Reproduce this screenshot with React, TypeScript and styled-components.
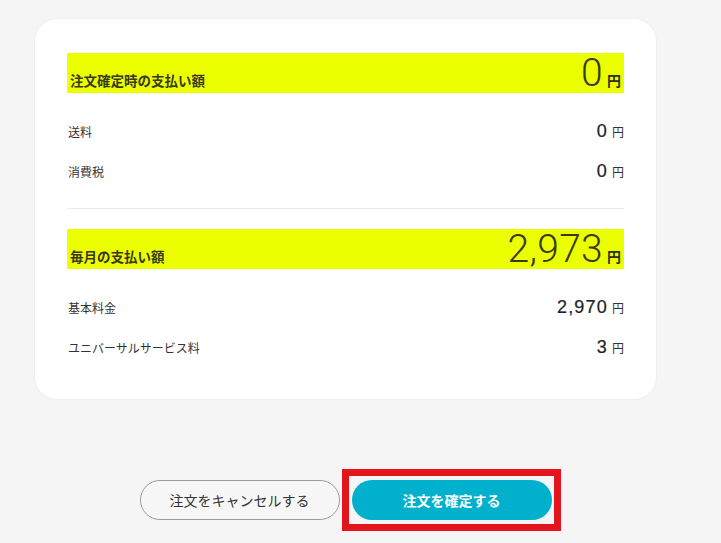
import React from "react";
import styled, { createGlobalStyle } from "styled-components";

const GlobalStyle = createGlobalStyle`
  html, body { margin: 0; padding: 0; background: #f5f5f5; }
  body {
    font-family: "Noto Sans CJK JP", "Noto Sans", sans-serif;
    color: #333;
  }
`;

const Page = styled.div`
  width: 721px;
  height: 543px;
  overflow: hidden;
  padding-top: 19px;
  box-sizing: border-box;
`;

const Card = styled.section`
  margin-left: 35px;
  width: 621px;
  box-sizing: border-box;
  background: #fff;
  border-radius: 22px;
  box-shadow: 0 0 0 1px #efefef;
  padding: 34px 32px 32px;
`;

const Bar = styled.div`
  height: 40px;
  background: #ebff00;
  display: flex;
  align-items: flex-end;
  justify-content: space-between;
  padding: 0 3px 5px;
  box-sizing: border-box;
`;

const BarLabel = styled.span`
  font-size: 13.5px;
  font-weight: 700;
  color: #3a3a1a;
  line-height: 1;
  padding-bottom: 1px;
`;

const BarAmount = styled.span`
  display: flex;
  align-items: baseline;
  line-height: 1;
`;

const BigNumber = styled.span`
  font-family: "Roboto", "Liberation Sans", sans-serif;
  font-weight: 300;
  font-size: 39px;
  color: #3a3a1a;
  line-height: 30px;
  letter-spacing: 0.3px;
`;

const BigYen = styled.span`
  font-size: 14px;
  font-weight: 700;
  margin-left: 4px;
  color: #2e2e10;
`;

const List = styled.div`
  padding-top: 18px;
`;

const Row = styled.div`
  height: 40px;
  display: flex;
  align-items: center;
  justify-content: space-between;
  padding-left: 1px;
`;

const RowLabel = styled.span`
  font-size: 12px;
  color: #333;
`;

const RowValue = styled.span`
  display: flex;
  align-items: baseline;
`;

const Num = styled.span`
  font-family: "Liberation Sans", Arial, sans-serif;
  font-weight: 400;
  font-size: 18px;
  letter-spacing: 1.2px;
  color: #222;
  -webkit-text-stroke: 0.2px #222;
`;

const Yen = styled.span`
  font-size: 12px;
  margin-left: 4px;
  color: #333;
`;

const Divider = styled.hr`
  border: none;
  height: 1px;
  background: #ebebeb;
  margin: 17px 0 20px;
`;

const Actions = styled.div`
  margin-left: 35px;
  width: 621px;
  margin-top: 81px;
  display: flex;
  justify-content: center;
  gap: 12px;
`;

const Button = styled.button<{ $primary?: boolean }>`
  width: 200px;
  height: 40px;
  border-radius: 20px;
  font-family: "Noto Sans CJK JP", "Noto Sans", sans-serif;
  font-size: 14px;
  cursor: pointer;
  box-sizing: border-box;
  border: ${(p) => (p.$primary ? "none" : "1px solid #9a9a9a")};
  background: ${(p) => (p.$primary ? "#00b0cc" : "#f7f7f7")};
  color: ${(p) => (p.$primary ? "#fff" : "#333")};
  font-weight: ${(p) => (p.$primary ? 700 : 400)};
`;

const Highlight = styled.div`
  position: relative;
  &::after {
    content: "";
    position: absolute;
    left: -10px;
    right: -9px;
    top: -11px;
    bottom: -11px;
    border: 7px solid #e3141c;
    pointer-events: none;
  }
`;

type Item = { label: string; value: string };

const Summary: React.FC<{ title: string; total: string; items: Item[] }> = ({
  title,
  total,
  items,
}) => (
  <div>
    <Bar>
      <BarLabel>{title}</BarLabel>
      <BarAmount>
        <BigNumber>{total}</BigNumber>
        <BigYen>円</BigYen>
      </BarAmount>
    </Bar>
    <List>
      {items.map((it) => (
        <Row key={it.label}>
          <RowLabel>{it.label}</RowLabel>
          <RowValue>
            <Num>{it.value}</Num>
            <Yen>円</Yen>
          </RowValue>
        </Row>
      ))}
    </List>
  </div>
);

export default function App() {
  return (
    <Page>
      <GlobalStyle />
      <Card>
        <Summary
          title="注文確定時の支払い額"
          total="0"
          items={[
            { label: "送料", value: "0" },
            { label: "消費税", value: "0" },
          ]}
        />
        <Divider />
        <Summary
          title="毎月の支払い額"
          total="2,973"
          items={[
            { label: "基本料金", value: "2,970" },
            { label: "ユニバーサルサービス料", value: "3" },
          ]}
        />
      </Card>
      <Actions>
        <Button>注文をキャンセルする</Button>
        <Highlight>
          <Button $primary>注文を確定する</Button>
        </Highlight>
      </Actions>
    </Page>
  );
}
